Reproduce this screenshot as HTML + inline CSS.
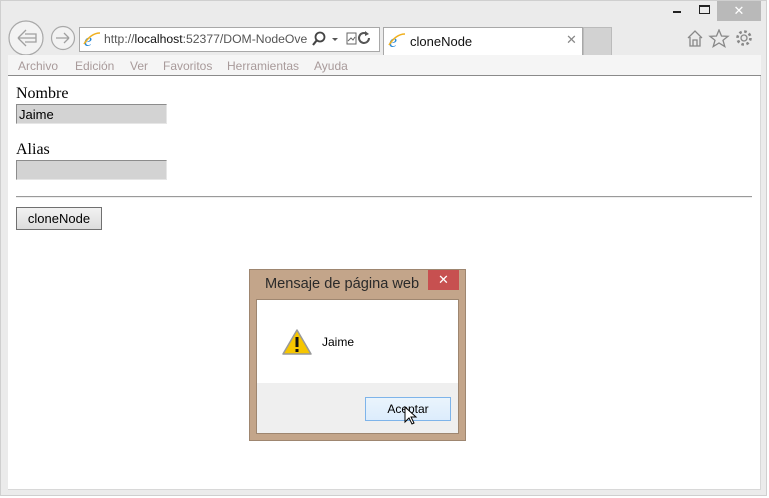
<!DOCTYPE html>
<html><head><meta charset="utf-8"><style>
*{margin:0;padding:0;box-sizing:border-box}
body{width:769px;height:498px;background:#fff;position:relative;overflow:hidden;font-family:"Liberation Sans",sans-serif}
.win{position:absolute;left:0;top:0;width:767px;height:496px;background:#ebebeb;border:1px solid #cfcfcf}
.abs{position:absolute}
.menu{left:8px;top:55px;width:753px;height:21px;background:#f5f5f5;border-bottom:1px solid #8a8a8a;font-size:12px;color:#a89a9a}
.menu span{position:absolute;top:4px}
.content{left:8px;top:76px;width:753px;height:414px;background:#fff;border-right:1px solid #d8d8d8;border-bottom:1px solid #d8d8d8}
.lbl{font-family:"Liberation Serif",serif;font-size:16px;color:#000}
.inp{width:151px;height:20px;background:#d3d3d3;border:1px solid #8c8c8c;border-right-color:#e6e6e6;border-bottom-color:#e6e6e6;font-size:13px;padding:2px 2px}
</style></head><body>
<div class="win"></div>
<div class="abs" style="left:673px;top:11px;width:8px;height:2px;background:#222"></div>
<div class="abs" style="left:699px;top:5px;width:11px;height:9px;border:1px solid #222;border-top-width:2px"></div>
<div class="abs" style="left:717px;top:1px;width:44px;height:20px;background:#b9b9b9;color:#fff;font-size:13px;text-align:center;line-height:20px">✕</div>
<svg class="abs" style="left:8px;top:19px" width="72" height="38">
<circle cx="18" cy="19" r="17" fill="#f3f3f3" stroke="#a8a8a8" stroke-width="1.2"/>
<path d="M10 19 L18 11 M10 19 L18 27 M10 19 H28 V23 H17 M10 19 H28 V15 H17" fill="none" stroke="#a0a0a0" stroke-width="1.3"/>
<circle cx="55" cy="19" r="11.5" fill="#f3f3f3" stroke="#a8a8a8" stroke-width="1.2"/>
<path d="M61 19 L56 14 M61 19 L56 24 M61 19 H48" fill="none" stroke="#a0a0a0" stroke-width="1.3"/>
</svg>
<div class="abs" style="left:79px;top:27px;width:301px;height:25px;background:#fff;border:1px solid #a8a8a8"></div>
<svg class="abs" style="left:83px;top:31px" width="18" height="18"><text x="1" y="15" font-size="18" font-style="italic" fill="#2a8ad8" font-family="Liberation Serif">e</text><path d="M1 13 Q8 2 17 2" stroke="#f0b020" stroke-width="1.6" fill="none"/></svg>
<div class="abs" style="left:104px;top:32px;font-size:12.2px;color:#555;white-space:nowrap">http://<span style="color:#111">localhost</span>:52377/DOM-NodeOve</div>
<svg class="abs" style="left:311px;top:31px" width="60" height="16">
<circle cx="9" cy="6" r="4.5" fill="none" stroke="#444" stroke-width="1.8"/><path d="M6 9 L2 14" stroke="#444" stroke-width="2.2"/>
<path d="M21 7 H27 L24 10 Z" fill="#555"/>
<rect x="36" y="2" width="9" height="11" fill="none" stroke="#666"/><path d="M37 10 L40 7 L42 9 L44 6" stroke="#666" fill="none"/>
<path d="M58 7 A5 5 0 1 1 56 3" fill="none" stroke="#555" stroke-width="2"/><path d="M54 0 L58 3 L54 5 Z" fill="#555"/>
</svg>
<div class="abs" style="left:383px;top:27px;width:200px;height:28px;background:#fff;border:1px solid #a8a8a8;border-bottom:none"></div>
<svg class="abs" style="left:388px;top:32px" width="18" height="18"><text x="1" y="15" font-size="18" font-style="italic" fill="#2a8ad8" font-family="Liberation Serif">e</text><path d="M1 13 Q8 2 17 2" stroke="#f0b020" stroke-width="1.6" fill="none"/></svg>
<div class="abs" style="left:410px;top:34px;font-size:13px;color:#111">cloneNode</div>
<div class="abs" style="left:566px;top:32px;font-size:13px;color:#888">✕</div>
<div class="abs" style="left:583px;top:27px;width:29px;height:28px;background:#d2d2d2;border:1px solid #bbb;border-bottom:none"></div>
<svg class="abs" style="left:686px;top:29px" width="72" height="20">
<path d="M2 9 L9 2 L16 9 M4 8 V17 H14 V8 M7 17 V11 H11 V17" fill="none" stroke="#888" stroke-width="1.3"/>
<path d="M33 1 L35.5 7 L42 7.3 L37 11.3 L38.8 17.6 L33 14 L27.2 17.6 L29 11.3 L24 7.3 L30.5 7 Z" fill="none" stroke="#888" stroke-width="1.3"/>
<circle cx="58" cy="9" r="3" fill="none" stroke="#888" stroke-width="1.3"/>
<circle cx="58" cy="9" r="6.5" fill="none" stroke="#888" stroke-width="2.6" stroke-dasharray="2.6 2.5"/>
</svg>
<div class="abs menu"><span style="left:10px">Archivo</span><span style="left:67px">Edición</span><span style="left:122px">Ver</span><span style="left:155px">Favoritos</span><span style="left:219px">Herramientas</span><span style="left:306px">Ayuda</span></div>
<div class="abs content">
 <div class="abs lbl" style="left:8px;top:9px">Nombre</div>
 <div class="abs inp" style="left:8px;top:28px">Jaime</div>
 <div class="abs lbl" style="left:8px;top:65px">Alias</div>
 <div class="abs inp" style="left:8px;top:84px"></div>
 <div class="abs" style="left:8px;top:120px;width:736px;height:2px;border-top:1px solid #9a9a9a;border-bottom:1px solid #eee"></div>
 <div class="abs" style="left:8px;top:131px;width:86px;height:23px;background:linear-gradient(#f2f2f2,#dcdcdc);border:1px solid #707070;font-size:13px;text-align:center;line-height:21px">cloneNode</div>
</div>
<div class="abs" style="left:249px;top:269px;width:217px;height:172px;background:#c3a58a;border:1px solid #9e8670"></div>
<div class="abs" style="left:265px;top:276px;font-size:14.6px;color:#2a2a2a">Mensaje de página web</div>
<div class="abs" style="left:428px;top:270px;width:31px;height:20px;background:#c75050;color:#fff;font-size:13px;text-align:center;line-height:20px">✕</div>
<div class="abs" style="left:256px;top:299px;width:203px;height:135px;background:#fff;border:1px solid #9e8670"></div>
<div class="abs" style="left:257px;top:383px;width:201px;height:50px;background:#efefef"></div>
<svg class="abs" style="left:281px;top:328px" width="32" height="28"><path d="M16 2 L30 26 H2 Z" fill="#f6c600" stroke="#999" stroke-width="1.5" stroke-linejoin="round"/><rect x="14.5" y="9" width="3" height="10" fill="#111"/><rect x="14.5" y="21" width="3" height="3" fill="#111"/></svg>
<div class="abs" style="left:322px;top:335px;font-size:12px;color:#000">Jaime</div>
<div class="abs" style="left:365px;top:397px;width:86px;height:24px;background:linear-gradient(#eaf4fc,#dcecfc);border:1px solid #7eb4ea;font-size:12px;text-align:center;line-height:22px;color:#000">Aceptar</div>
<svg class="abs" style="left:404px;top:406px" width="14" height="20"><path d="M1 1 V16 L5 12 L8 18 L10 17 L7 11 H12 Z" fill="#fff" stroke="#000" stroke-width="1"/></svg>
</body></html>
